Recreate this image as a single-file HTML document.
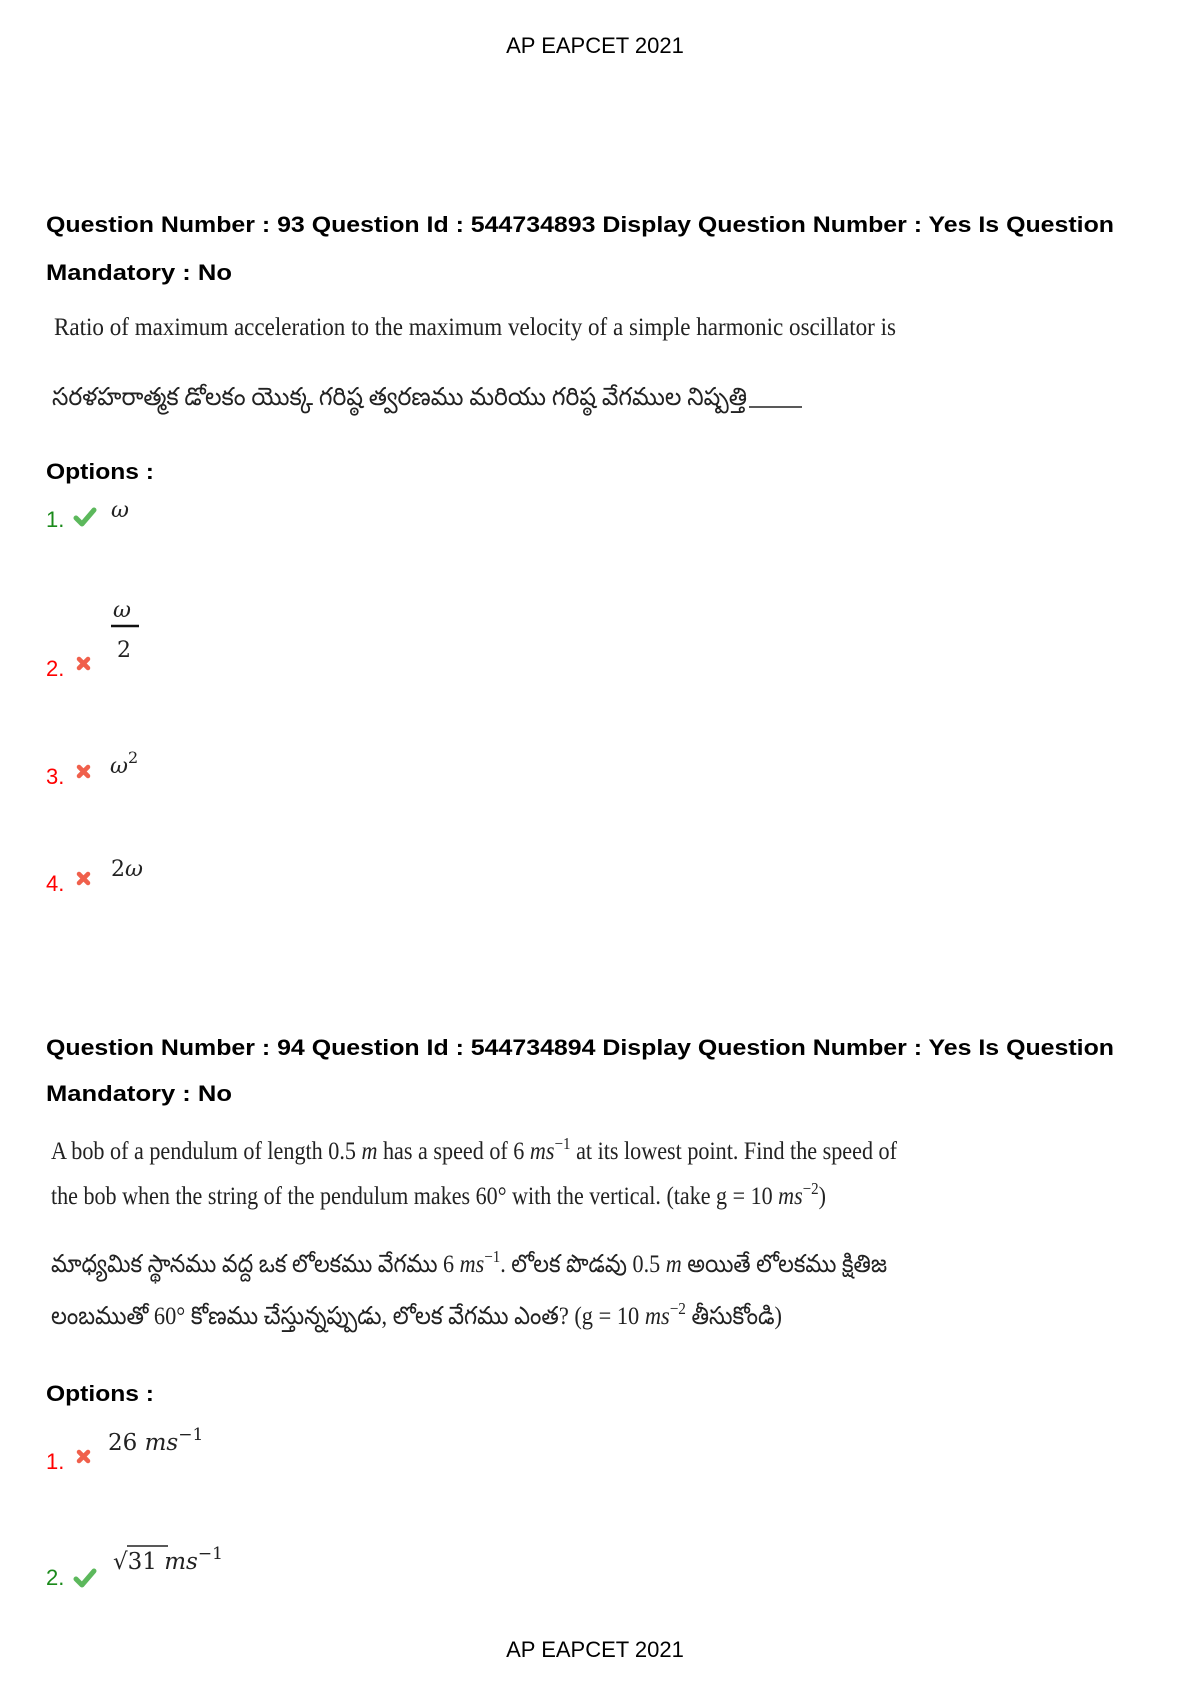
<!DOCTYPE html>
<html><head><meta charset="utf-8"><style>
html,body{margin:0;padding:0;background:#fff;}
body{width:1190px;height:1684px;position:relative;overflow:hidden;}
svg{position:absolute;left:0;top:0;}
</style></head><body>
<svg width="1190" height="1684" viewBox="0 0 1190 1684" xmlns="http://www.w3.org/2000/svg">
<g font-family="Liberation Sans, sans-serif" fill="#000">
<text x="595" y="53" font-size="22" text-anchor="middle">AP EAPCET 2021</text>
<text x="595" y="1657" font-size="22" text-anchor="middle">AP EAPCET 2021</text>
</g>
<g font-family="Liberation Sans, sans-serif" font-weight="bold" font-size="22" fill="#000">
<text x="46" y="232" textLength="1068" lengthAdjust="spacingAndGlyphs">Question Number : 93 Question Id : 544734893 Display Question Number : Yes Is Question</text>
<text x="46" y="280" textLength="186" lengthAdjust="spacingAndGlyphs">Mandatory : No</text>
<text x="46" y="479" textLength="108" lengthAdjust="spacingAndGlyphs">Options :</text>
<text x="46" y="1055" textLength="1068" lengthAdjust="spacingAndGlyphs">Question Number : 94 Question Id : 544734894 Display Question Number : Yes Is Question</text>
<text x="46" y="1101" textLength="186" lengthAdjust="spacingAndGlyphs">Mandatory : No</text>
<text x="46" y="1401" textLength="108" lengthAdjust="spacingAndGlyphs">Options :</text>
</g>
<g font-family="Liberation Serif, serif" font-size="25" fill="#222">
<text x="54" y="335" textLength="842" lengthAdjust="spacingAndGlyphs">Ratio of maximum acceleration to the maximum velocity of a simple harmonic oscillator is</text>
<text x="52" y="405" textLength="695" lengthAdjust="spacingAndGlyphs">సరళహరాత్మక డోలకం యొక్క గరిష్ఠ త్వరణము మరియు గరిష్ఠ వేగముల నిష్పత్తి</text>
<line x1="749" y1="407" x2="802" y2="407" stroke="#222" stroke-width="1.5"/>
<text x="51" y="1159" textLength="846" lengthAdjust="spacingAndGlyphs">A bob of a pendulum of length 0.5 <tspan font-style="italic">m</tspan> has a speed of  6 <tspan font-style="italic">ms</tspan><tspan dy="-10" font-size="17">−1</tspan><tspan dy="10"> at its lowest point. Find the speed of</tspan></text>
<text x="51" y="1204" textLength="775" lengthAdjust="spacingAndGlyphs">the bob when the string of the pendulum makes 60° with the vertical. (take g = 10 <tspan font-style="italic">ms</tspan><tspan dy="-10" font-size="17">−2</tspan><tspan dy="10">)</tspan></text>
<text x="51" y="1272" textLength="836" lengthAdjust="spacingAndGlyphs">మాధ్యమిక స్థానము వద్ద ఒక లోలకము వేగము 6 <tspan font-style="italic">ms</tspan><tspan dy="-10" font-size="17">−1</tspan><tspan dy="10">. లోలక పొడవు 0.5 </tspan><tspan font-style="italic">m</tspan> అయితే లోలకము క్షితిజ</text>
<text x="51" y="1324" textLength="731" lengthAdjust="spacingAndGlyphs">లంబముతో 60° కోణము చేస్తున్నప్పుడు, లోలక వేగము ఎంత? (g = 10 <tspan font-style="italic">ms</tspan><tspan dy="-10" font-size="17">−2</tspan><tspan dy="10"> తీసుకోండి)</tspan></text>
</g>
<g font-family="Liberation Sans, sans-serif" font-size="22">
<text x="46" y="527" fill="#1a8a1a">1.</text>
<text x="46" y="676" fill="#f00">2.</text>
<text x="46" y="784" fill="#f00">3.</text>
<text x="46" y="891" fill="#f00">4.</text>
<text x="46" y="1469" fill="#f00">1.</text>
<text x="46" y="1585" fill="#1a8a1a">2.</text>
</g>
<g fill="none" stroke="#5cb85c" stroke-width="5" stroke-linecap="round" stroke-linejoin="round">
<path d="M76 518 L82 524 L94 510"/>
<path d="M76 1579 L82 1585 L94 1571"/>
</g>
<g stroke="#f0604c" stroke-width="4.5" stroke-linecap="round">
<path d="M79 659 L88 668 M88 659 L79 668"/>
<path d="M79 767 L88 776 M88 767 L79 776"/>
<path d="M79 874 L88 883 M88 874 L79 883"/>
<path d="M79 1452 L88 1461 M88 1452 L79 1461"/>
</g>
<g font-family="DejaVu Serif, serif" fill="#222">
<text x="111" y="517" font-size="22" font-style="italic">ω</text>
<text x="113" y="617" font-size="22" font-style="italic">ω</text>
<line x1="111" y1="626" x2="139" y2="626" stroke="#111" stroke-width="2.5"/>
<text x="117" y="657" font-size="22">2</text>
<text x="110" y="773" font-size="22" font-style="italic">ω<tspan dy="-10" font-size="16" font-style="normal">2</tspan></text>
<text x="111" y="876" font-size="22">2<tspan font-style="italic">ω</tspan></text>
<text x="108" y="1450" font-size="23">26  <tspan font-style="italic">ms</tspan><tspan dy="-10" font-size="17">−1</tspan></text>
<text x="113" y="1569" font-size="23">√31 <tspan font-style="italic">ms</tspan><tspan dy="-10" font-size="17">−1</tspan></text>
<line x1="127" y1="1546" x2="168" y2="1546" stroke="#222" stroke-width="1.5"/>
</g>
</svg>
</body></html>
